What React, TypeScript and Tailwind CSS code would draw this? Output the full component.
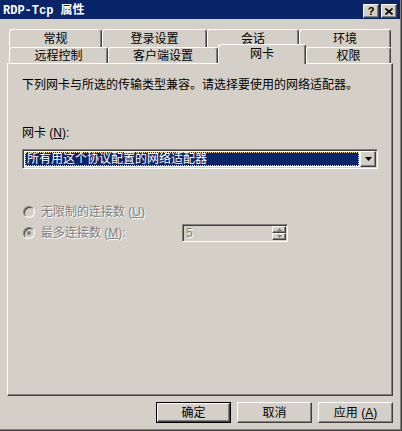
import React from "react";

// RDP-Tcp 属性 — Windows classic property sheet, 网卡 tab selected.

const RAISED =
  "border border-t-white border-l-white border-r-[#404040] border-b-[#404040] shadow-[inset_-1px_-1px_#808080]";
const SUNKEN =
  "border border-t-[#808080] border-l-[#808080] border-r-white border-b-white shadow-[inset_1px_1px_#404040,inset_-1px_-1px_#D4D0C8]";
const TAB =
  "flex items-center justify-center rounded-t-[3px] border-t border-l border-r border-t-white border-l-white border-r-[#404040] shadow-[inset_-1px_0_#808080] bg-[#D4D0C8] leading-none";
const DISABLED_TEXT = "text-[#808080] [text-shadow:1px_1px_0_#ffffff]";

function Tab({ label, className }: { label: string; className: string }) {
  return <div className={`${TAB} ${className}`}>{label}</div>;
}

function Radio({ checked }: { checked?: boolean }) {
  return (
    <span className="relative w-[12px] h-[12px] flex-shrink-0 rounded-full border border-t-[#808080] border-l-[#808080] border-r-white border-b-white bg-[#D4D0C8] shadow-[inset_1px_1px_#404040,inset_-1px_-1px_#D4D0C8] flex items-center justify-center">
      {checked && <span className="w-[4px] h-[4px] rounded-full bg-[#808080]" />}
    </span>
  );
}

function PushButton({ children, isDefault }: { children: React.ReactNode; isDefault?: boolean }) {
  if (isDefault) {
    return (
      <div className="w-[75px] h-[21px] border border-black flex">
        <div className={`${RAISED} flex-1 flex items-center justify-center leading-none`}>{children}</div>
      </div>
    );
  }
  return (
    <div className={`${RAISED} w-[75px] h-[21px] flex items-center justify-center leading-none`}>
      {children}
    </div>
  );
}

export default function App() {
  return (
    <div className="w-[402px] h-[431px] bg-[#D4D0C8] border-r border-b border-r-[#404040] border-b-[#404040] shadow-[inset_-1px_-1px_#808080] flex flex-col text-[12px] text-black font-['Liberation_Sans','Noto_Sans_CJK_SC',sans-serif] overflow-hidden">
      {/* Title bar */}
      <div className="w-[400px] h-[19px] flex-shrink-0 bg-[#0A246A] flex items-center justify-between pl-[3px] pr-[3px] pt-[3px]">
        <span className="text-white font-bold text-[12px] leading-none font-['Liberation_Mono','Noto_Sans_CJK_SC',monospace] whitespace-pre">
          RDP-Tcp 属性
        </span>
        <div className="flex gap-[2px]">
          <div className={`${RAISED} bg-[#D4D0C8] w-[16px] h-[14px] flex items-center justify-center`}>
            <span className="font-bold text-[11px] leading-none font-['Liberation_Sans',sans-serif] mt-[1px]">?</span>
          </div>
          <div className={`${RAISED} bg-[#D4D0C8] w-[16px] h-[14px] flex items-center justify-center`}>
            <svg width="8" height="7" viewBox="0 0 8 7">
              <path d="M0.5 0.5 L7.5 6.5 M7.5 0.5 L0.5 6.5" stroke="#000" strokeWidth="1.6" />
            </svg>
          </div>
        </div>
      </div>

      {/* Tabs */}
      <div className="mt-[10px] pl-[9px] flex flex-col">
        <div className="flex h-[18px]">
          <Tab label="常规" className="w-[93px] h-[18px]" />
          <Tab label="登录设置" className="w-[105px] h-[18px]" />
          <Tab label="会话" className="w-[92px] h-[18px]" />
          <Tab label="环境" className="w-[92px] h-[18px]" />
        </div>
        <div className="flex h-[16px] items-start">
          <Tab label="远程控制" className="w-[99px] h-[16px]" />
          <Tab label="客户端设置" className="w-[110px] h-[16px]" />
          <Tab label="网卡" className="relative z-10 w-[88px] h-[20px] -mt-[3px] pb-[2px]" />
          <Tab label="权限" className="w-[85px] h-[16px]" />
        </div>
      </div>

      {/* Panel */}
      <div className="ml-[7px] w-[386px] h-[333px] flex-shrink-0 border border-t-white border-l-white border-r-[#404040] border-b-[#404040] shadow-[inset_-1px_-1px_#808080] flex flex-col pl-[14px] pt-[15px]">
        <p className="leading-[12px] whitespace-nowrap">
          下列网卡与所选的传输类型兼容。请选择要使用的网络适配器。
        </p>

        <p className="mt-[36px] leading-[12px] whitespace-pre">
          网卡 (<u>N</u>):
        </p>

        <div className={`${SUNKEN} mt-[10px] w-[356px] h-[20px] p-[1px] flex bg-white`}>
          <div className="flex-1 p-[1px] flex">
            <div className="flex-1 bg-[#0A246A] border border-dotted border-[#F5DB95] text-white flex items-center pl-[1px] leading-none whitespace-nowrap">
              所有用这个协议配置的网络适配器
            </div>
          </div>
          <div className={`${RAISED} bg-[#D4D0C8] w-[16px] flex items-center justify-center`}>
            <svg width="7" height="4" viewBox="0 0 7 4">
              <path d="M0 0 H7 L3.5 4 Z" fill="#000" />
            </svg>
          </div>
        </div>

        <div className="mt-[37px] flex items-center gap-[6px] pl-[1px] h-[12px]">
          <Radio />
          <span className={`${DISABLED_TEXT} leading-none whitespace-pre`}>
            无限制的连接数 (<u>U</u>)
          </span>
        </div>

        <div className="mt-[6px] flex items-center h-[18px]">
          <div className="w-[160px] flex items-center gap-[6px] pl-[1px]">
            <Radio checked />
            <span className={`${DISABLED_TEXT} leading-none whitespace-pre`}>
              最多连接数 (<u>M</u>):
            </span>
          </div>
          <div className={`${SUNKEN} w-[106px] h-[18px] p-[1px] flex`}>
            <span className={`${DISABLED_TEXT} flex-1 flex items-center pl-[2px] leading-none`}>5</span>
            <div className="w-[14px] flex flex-col">
              <div className={`${RAISED} flex-1 flex items-center justify-center`}>
                <svg width="5" height="3" viewBox="0 0 5 3">
                  <path d="M2.5 0 L5 3 H0 Z" fill="#808080" />
                </svg>
              </div>
              <div className={`${RAISED} flex-1 flex items-center justify-center`}>
                <svg width="5" height="3" viewBox="0 0 5 3">
                  <path d="M0 0 H5 L2.5 3 Z" fill="#808080" />
                </svg>
              </div>
            </div>
          </div>
        </div>
      </div>

      {/* Buttons */}
      <div className="mt-[6px] flex justify-end gap-[6px] pr-[8px]">
        <PushButton isDefault>确定</PushButton>
        <PushButton>取消</PushButton>
        <PushButton>
          <span className="whitespace-pre">
            应用 (<u>A</u>)
          </span>
        </PushButton>
      </div>
    </div>
  );
}
